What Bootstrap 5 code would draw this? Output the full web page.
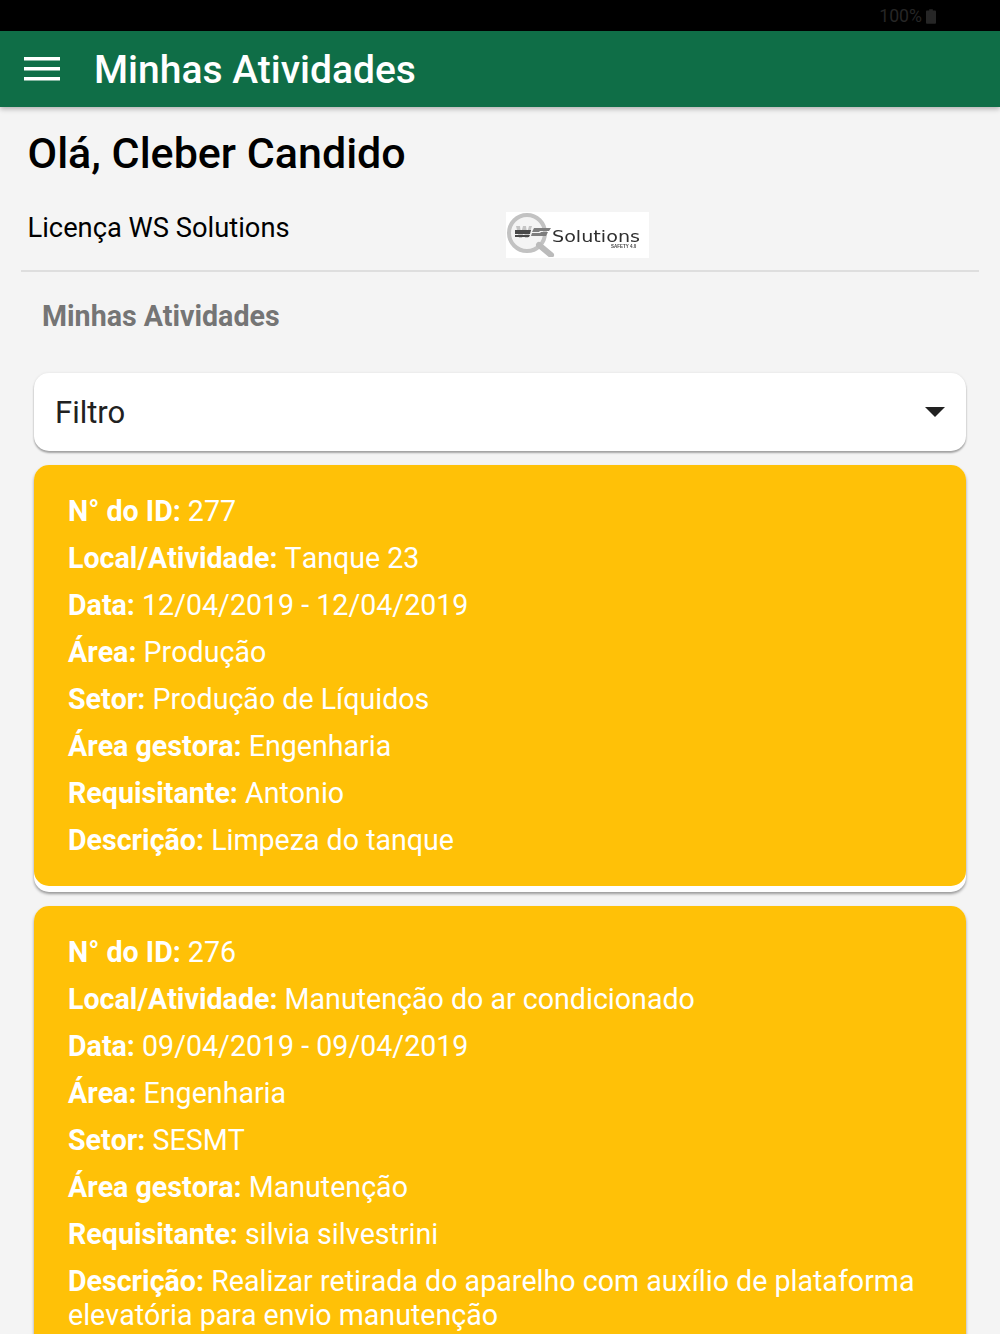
<!DOCTYPE html>
<html lang="pt-BR">
<head>
<meta charset="utf-8">
<title>Minhas Atividades</title>
<link rel="stylesheet" href="https://cdn.jsdelivr.net/npm/bootstrap@5.3.0/dist/css/bootstrap.min.css">
<style>
html,body{height:1334px;overflow:hidden}
body{background:#f4f4f4;font-family:Roboto,"Liberation Sans",sans-serif;color:#000}
.status-strip{height:31px;background:#000;color:#262626;font-size:17.700px;line-height:31px;padding:2px 64px 0 0}
.app-head{height:76px;background:#0f6e47;color:#fff;padding:0 0 0 24px;box-shadow:0 2px 5px rgba(0,0,0,.28);flex-wrap:nowrap;justify-content:flex-start}
.app-title{font-size:39px;font-weight:500;line-height:76px;margin-left:34px;padding-top:2px;color:#fff}
.burger{width:36px;display:block}
.greet{font-size:43px;font-weight:500;line-height:48px;margin:0;padding:22px 0 0 27.500px}
.lic-row{height:95px;margin:0 21px;border-bottom:2px solid #dedede;padding-left:6.500px}
.lic-text{font-size:27.300px;line-height:34px;width:478.500px;padding-top:34px}
.ws-logo{width:143px;height:46px;background:#fff;margin-top:35px;display:block}
.sect-title{font-size:28.600px;font-weight:700;color:#757575;line-height:34px;margin:0;padding:27px 0 0 42px}
.stack{padding:40px 34px 0}
.filter-box{height:78px;background:#fff;border-radius:15px;box-shadow:0 2px 2px rgba(0,0,0,.32),0 0 3px rgba(0,0,0,.08);font-size:31px;color:#212121;padding:2px 21px 0;margin-bottom:14px}
.caret-mark{width:0;height:0;border-left:10px solid transparent;border-right:10px solid transparent;border-top:10px solid #212121;margin-top:-2px}
.task{border:0;border-radius:15px;background:#fff;box-shadow:0 2px 3px rgba(0,0,0,.38);padding-bottom:6px;margin-bottom:14px}
.task-in{background:#ffc107;color:#fff;border-radius:15px;padding:29px 34px 16px;font-size:28.600px;line-height:34px;font-kerning:none}
.task-in p{margin:0 0 13px}
.task-in b{font-weight:700}
</style>
</head>
<body>
<div class="status-strip d-flex justify-content-end align-items-center gap-1">
  <span>100%</span>
  <svg width="10" height="15" viewBox="0 0 11 16" aria-hidden="true"><path fill="#262626" d="M3.5 0h4v1.500h2.500a1 1 0 0 1 1 1V15a1 1 0 0 1-1 1H1a1 1 0 0 1-1-1V2.500a1 1 0 0 1 1-1h2.500z"/></svg>
</div>
<nav class="navbar app-head d-flex align-items-center">
  <svg class="burger" height="24" viewBox="0 0 36 24" aria-label="Menu"><path fill="#fff" d="M0 0h36v3.500H0zM0 10h36v3.500H0zM0 20h36v3.500H0z"/></svg>
  <span class="app-title">Minhas Atividades</span>
</nav>
<h1 class="greet">Olá, Cleber Candido</h1>
<div class="lic-row d-flex align-items-start">
  <div class="lic-text">Licença WS Solutions</div>
  <svg class="ws-logo" viewBox="0 0 143 46" aria-label="WS Solutions">
    <defs><filter id="soft" x="-5%" y="-5%" width="110%" height="110%"><feGaussianBlur stdDeviation=".6"/></filter></defs>
    <g filter="url(#soft)">
      <circle cx="21" cy="21" r="18" fill="#f4f4f4" stroke="#c2c2c2" stroke-width="4"/>
      <path d="M33 33l12 10" stroke="#bbb" stroke-width="6" stroke-linecap="round"/>
      <path d="M10 14l3 12h3l2-7 1 7h3l4-12h-3l-2 7-1-7h-3l-2 7-1-7z" fill="#c4c4c4"/>
      <path d="M9 18h16l-1 4H9zM9 23h15l-1 2H9z" fill="#4a4a4a"/>
      <path d="M28 16h17l-2 3H34l-1 1h9l-2 4H25l1-3h8l1-1h-9z" fill="#7d7d7d"/>
      <text x="46" y="30" font-family="'DejaVu Sans',sans-serif" font-size="15" fill="#2e2e2e" textLength="88" lengthAdjust="spacingAndGlyphs">Solutions</text>
      <text x="105" y="36" font-family="'Liberation Sans',sans-serif" font-size="4.500" font-weight="700" fill="#444">SAFETY 4.0</text>
    </g>
  </svg>
</div>
<h2 class="sect-title">Minhas Atividades</h2>
<div class="stack">
  <div class="filter-box d-flex align-items-center justify-content-between">
    <span>Filtro</span><span class="caret-mark"></span>
  </div>
  <div class="card task">
    <div class="task-in">
      <p><b>N° do ID:</b> 277</p>
      <p><b>Local/Atividade:</b> Tanque 23</p>
      <p><b>Data:</b> 12/04/2019 - 12/04/2019</p>
      <p><b>Área:</b> Produção</p>
      <p><b>Setor:</b> Produção de Líquidos</p>
      <p><b>Área gestora:</b> Engenharia</p>
      <p><b>Requisitante:</b> Antonio</p>
      <p><b>Descrição:</b> Limpeza do tanque</p>
    </div>
  </div>
  <div class="card task">
    <div class="task-in">
      <p><b>N° do ID:</b> 276</p>
      <p><b>Local/Atividade:</b> Manutenção do ar condicionado</p>
      <p><b>Data:</b> 09/04/2019 - 09/04/2019</p>
      <p><b>Área:</b> Engenharia</p>
      <p><b>Setor:</b> SESMT</p>
      <p><b>Área gestora:</b> Manutenção</p>
      <p><b>Requisitante:</b> silvia silvestrini</p>
      <p><b>Descrição:</b> Realizar retirada do aparelho com auxílio de plataforma elevatória para envio manutenção</p>
    </div>
  </div>
</div>
</body>
</html>
